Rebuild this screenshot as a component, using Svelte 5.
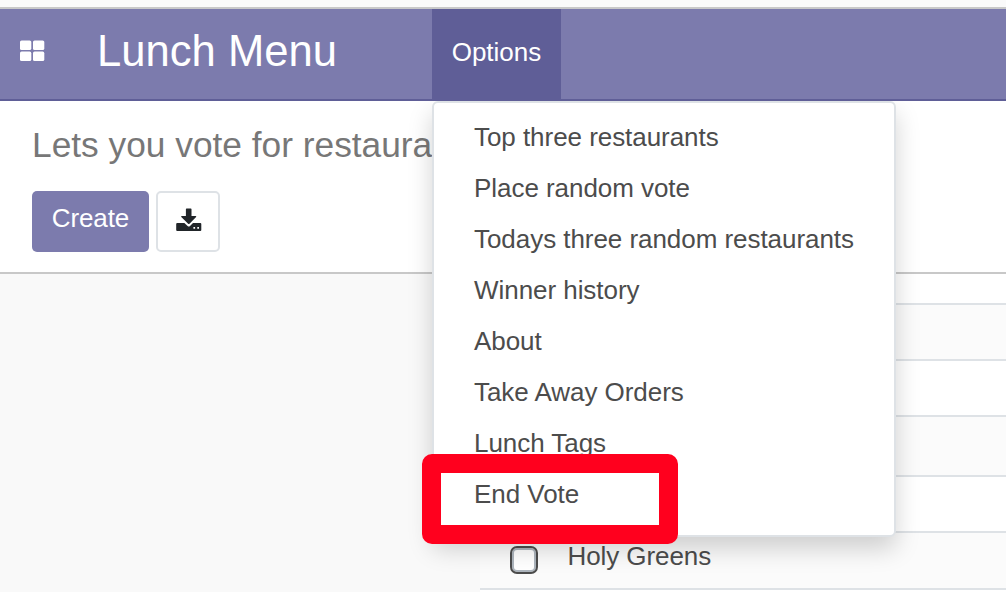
<script>
  const items = [
    'Top three restaurants',
    'Place random vote',
    'Todays three random restaurants',
    'Winner history',
    'About',
    'Take Away Orders',
    'Lunch Tags',
    'End Vote'
  ];
  const rows = [
    { height: 31, name: '' },
    { height: 56, name: '' },
    { height: 56, name: '' },
    { height: 60, name: '' },
    { height: 56, name: '' },
    { height: 57, name: 'Holy Greens' }
  ];
</script>

<div class="page">
  <div class="chrome"></div>
  <header>
    <button class="apps" aria-label="Apps">
      <svg width="25" height="22" viewBox="0 0 25 22" fill="#fff">
        <rect x="0" y="0.4" width="11.3" height="9.600" rx="1.6" />
        <rect x="13" y="0.4" width="11.3" height="9.600" rx="1.6" />
        <rect x="0" y="11.6" width="11.3" height="9.400" rx="1.6" />
        <rect x="13" y="11.6" width="11.3" height="9.400" rx="1.6" />
      </svg>
    </button>
    <span class="brand">Lunch Menu</span>
    <nav>
      <button class="options">Options</button>
      <div class="menu">
        {#each items as item}
          <div class="item">{item}</div>
        {/each}
        <div class="highlight"></div>
      </div>
    </nav>
  </header>
  <section class="panel">
    <h1>Lets you vote for restaura</h1>
    <div class="buttons">
      <button class="create">Create</button>
      <button class="download" aria-label="Export">
        <svg width="26" height="24" viewBox="0 0 26 24">
          <path fill="#212529" d="M1.2 15h7.2l3.2 3.1q1.200 1 2.400 0L17 15h7.300q1 0 1 1v6q0 1-1 1H1.200q-1 0-1-1v-6q0-1 1-1z" />
          <path fill="#212529" stroke="#fff" stroke-width="1" paint-order="stroke" d="M10.600 0.500h4.200q.7 0 .7.7v6.700h4.200q1.100.2.4 1.200l-6.600 6.700q-.7.6-1.400 0L5.300 9.100q-.7-1 .4-1.200h4.200V1.200q0-.7.7-.7z" />
          <path fill="#fff" d="M17.400 19h1.700v1.700h-1.700zM21.300 19h1.700v1.700h-1.700z" />
        </svg>
      </button>
    </div>
  </section>
  <main>
    <aside></aside>
    <div class="table">
      {#each rows as row}
        <div class="row" style="height: {row.height}px">
          {#if row.name}
            <span class="check"></span>
            <span class="name">{row.name}</span>
          {/if}
        </div>
      {/each}
    </div>
  </main>
</div>

<style>
  :global(body) { margin: 0; overflow: hidden; }
  .page {
    width: 1006px;
    height: 592px;
    overflow: hidden;
    display: flex;
    flex-direction: column;
    background: #fff;
    color: #4c4c4c;
    font: 26px/39px "Liberation Sans", Arial, sans-serif;
  }
  button { font: inherit; border: 0; padding: 0; margin: 0; background: none; color: inherit; }
  svg { display: block; }
  .chrome { height: 7px; flex: none; background: #fafafa; border-bottom: 2px solid #c8c8c8; }
  header {
    flex: none;
    display: flex;
    height: 90px;
    background: #7c7bad;
    border-bottom: 2px solid #5f5e97;
    color: #fff;
  }
  .apps { width: 97px; padding: 31px 0 0 20px; display: flex; align-items: flex-start; box-sizing: border-box; }
  .brand { width: 335px; font-size: 43.6px; line-height: 84px; white-space: nowrap; }
  nav { position: relative; }
  .options { display: block; width: 129px; height: 92px; padding-bottom: 5px; background: #5f5e97; box-sizing: border-box; }
  .menu {
    position: absolute;
    top: 92px;
    left: 0;
    width: 464px;
    height: 436px;
    box-sizing: border-box;
    padding: 11px 0 9px;
    border: 2px solid #dee2e6;
    border-radius: 6px;
    background: #fff;
    color: #4c4c4c;
    box-shadow: 0 12px 24px rgba(0, 0, 0, 0.175);
    clip-path: inset(0 -60px -60px -60px);
  }
  .item { height: 51px; padding: 4px 40px 8px; box-sizing: border-box; white-space: nowrap; letter-spacing: -0.05px; }
  .highlight {
    position: absolute;
    left: -12px;
    top: 351px;
    width: 256px;
    height: 90px;
    box-sizing: border-box;
    border: 19px solid #ff001e;
    border-radius: 10px;
  }
  .panel { flex: none; height: 171px; padding: 0 32px; border-bottom: 2px solid #c8c8c8; }
  h1 { margin: 0; padding-top: 17px; height: 73px; font-size: 35.3px; line-height: 54px; font-weight: 400; color: #777; white-space: nowrap; }
  .buttons { display: flex; gap: 7px; }
  .create { width: 117px; height: 61px; padding-bottom: 7px; border-radius: 5px; background: #7c7bad; color: #fff; letter-spacing: -0.1px; }
  .download { width: 64px; height: 61px; border: 2px solid #dee2e6; border-radius: 5px; display: flex; align-items: center; justify-content: center; box-sizing: border-box; padding: 0 0 3px 2px; }
  main { flex: 1; display: flex; background: #f9f9f9; }
  aside { width: 480px; flex: none; }
  .table { flex: 1; background: #fff; }
  .row { display: flex; box-sizing: border-box; border-bottom: 2px solid #dee2e6; }
  .row:nth-child(even) { background: #fbfbfb; }
  .check { width: 28px; height: 28px; margin: 13px 0 0 30px; box-sizing: border-box; border: 2px solid #4c4c4c; border-radius: 7px; background: #fff; box-shadow: inset 0 0 0 2px #adb5bd; }
  .name { padding-left: 29.500px; line-height: 47px; letter-spacing: -0.08px; }
</style>
